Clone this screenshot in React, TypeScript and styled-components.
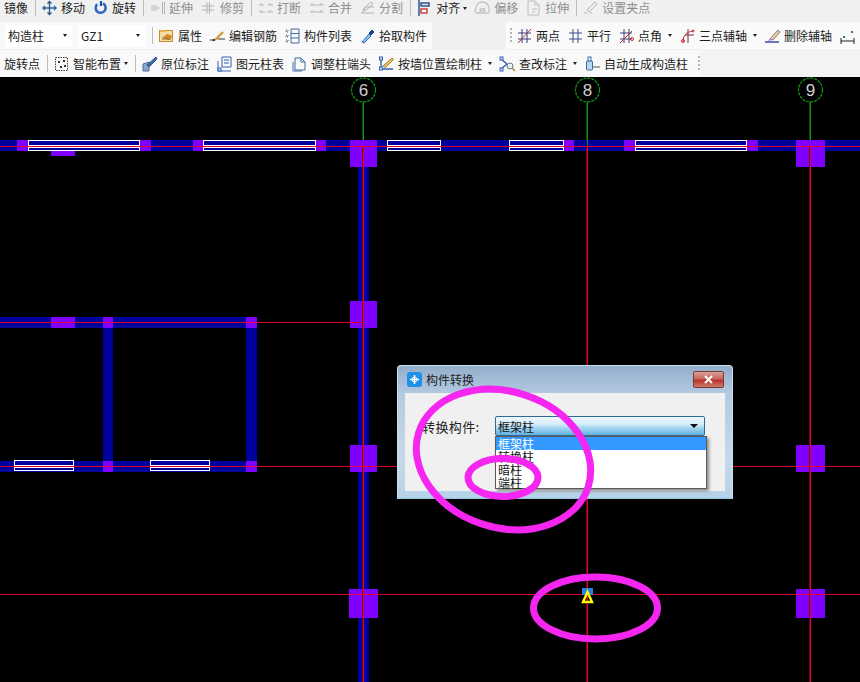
import React from "react";
import { createGlobalStyle, styled } from "styled-components";

const GlobalStyle = createGlobalStyle`
  html, body {
    margin: 0;
    padding: 0;
    background: #000;
    overflow: hidden;
  }
  body {
    font-family: "Noto Sans CJK SC", "Liberation Sans", sans-serif;
  }
`;

const Page = styled.div`
  width: 860px;
  height: 682px;
  display: flex;
  flex-direction: column;
  overflow: hidden;
`;

const Bars = styled.div`
  height: 77px;
  flex: none;
  display: flex;
  flex-direction: column;
  background: #f0f0f0;
`;

const Row = styled.div<{ $height: number; $after: number }>`
  display: flex;
  height: ${(p) => p.$height}px;
  margin-bottom: ${(p) => p.$after}px;
`;

const Strip = styled.div<{ $start: number; $width?: number; $bg?: string }>`
  display: flex;
  align-items: center;
  padding-left: ${(p) => p.$start}px;
  width: ${(p) => (p.$width ? `${p.$width}px` : "auto")};
  flex: ${(p) => (p.$width ? "none" : 1)};
  box-sizing: border-box;
  background: ${(p) => p.$bg || "transparent"};
  overflow: hidden;
  white-space: nowrap;
`;

const Tool = styled.div<{ $off?: boolean }>`
  display: flex;
  flex: none;
  align-items: center;
  gap: 4px;
  margin-right: 8px;
  font-size: 12px;
  line-height: 16px;
  color: ${(p) => (p.$off ? "#8f8f8f" : "#1c1c1c")};
`;

const IconSlot = styled.svg`
  width: 15px;
  height: 16px;
  flex: none;
  overflow: visible;
`;

const Caret = styled.i<{ $gap: number }>`
  width: 0;
  height: 0;
  flex: none;
  margin-left: ${(p) => p.$gap - 4}px;
  border-left: 2.5px solid transparent;
  border-right: 2.5px solid transparent;
  border-top: 3px solid #222;
`;

const Sep = styled.span<{ $lead?: number }>`
  width: 1px;
  height: 17px;
  flex: none;
  margin: 0 6px 0 ${(p) => p.$lead ?? -1}px;
  background: #bdbdbd;
`;

const Grip = styled.span<{ $lead?: number; $after: number }>`
  width: 2px;
  height: 16px;
  flex: none;
  margin-left: ${(p) => p.$lead ?? 0}px;
  margin-right: ${(p) => p.$after}px;
  background: repeating-linear-gradient(#b4b4b4 0 2px, transparent 2px 4px);
`;

const Combo = styled.div`
  width: 67px;
  height: 22px;
  flex: none;
  box-sizing: border-box;
  padding: 0 5px 0 3px;
  margin-right: 6px;
  display: flex;
  align-items: center;
  justify-content: space-between;
  background: #fff;
  font-size: 12px;
  color: #222;
`;

const Canvas = styled.div`
  position: relative;
  flex: 1;
  background: #000;
`;

const Drawing = styled.svg`
  display: block;
  width: 860px;
  height: 605px;
`;

const Marks = styled.svg`
  position: absolute;
  left: 0;
  top: 0;
  width: 860px;
  height: 605px;
  pointer-events: none;
`;

const Dialog = styled.div`
  position: absolute;
  left: 397px;
  top: 288px;
  width: 336px;
  height: 134px;
  box-sizing: border-box;
  padding: 0 7px 7px;
  display: flex;
  flex-direction: column;
  border: 1px solid #c9e2f2;
  border-bottom-color: #8fc4e6;
  border-radius: 4px 4px 0 0;
  background: linear-gradient(#93aecb, #b4cbe1 22%, #c6d9ea 70%, #b5d2e8);
`;

const TitleBar = styled.div`
  height: 27px;
  flex: none;
  display: flex;
  align-items: center;
  gap: 4px;
  margin-left: 2px;
  font-size: 12px;
  color: #222;
`;

const TitleIcon = styled.svg`
  width: 15px;
  height: 15px;
  flex: none;
`;

const CloseButton = styled.div`
  width: 31px;
  height: 17px;
  margin: -1px 1px 0 auto;
  box-sizing: border-box;
  display: flex;
  align-items: center;
  justify-content: center;
  border: 1px solid #7a3a36;
  border-radius: 2px;
  background: linear-gradient(#d9a19b, #c9645b 45%, #b93327 55%, #cf7b68);
`;

const Client = styled.div`
  flex: 1;
  box-sizing: border-box;
  padding: 23px 20px 0 17px;
  background: #f0f0f0;
`;

const Field = styled.div`
  display: flex;
  align-items: center;
  height: 20px;
  font-size: 13px;
  color: #222;
`;

const FieldLabel = styled.label`
  width: 73px;
  flex: none;
  letter-spacing: 0.4px;
`;

const Select = styled.div`
  position: relative;
  flex: 1;
  height: 20px;
  box-sizing: border-box;
  padding: 0 6px 0 2px;
  display: flex;
  align-items: center;
  justify-content: space-between;
  border: 1px solid #2f6a8f;
  border-radius: 2px;
  background: linear-gradient(#eef7fd, #d5ecfa 40%, #a5d6f3 60%, #62b2e2);
  font-size: 12px;
  color: #111;
`;

const SelectCaret = styled.i`
  width: 0;
  height: 0;
  border-left: 4px solid transparent;
  border-right: 4px solid transparent;
  border-top: 4px solid #111;
`;

const DropList = styled.ul`
  position: absolute;
  left: -1px;
  top: 19px;
  width: 212px;
  height: 53px;
  margin: 0;
  padding: 0;
  box-sizing: border-box;
  list-style: none;
  background: #fff;
  border: 1px solid #5c5c5c;
  box-shadow: 2px 2px 3px #8a8a8a;
`;

const DropItem = styled.li<{ $active?: boolean }>`
  height: 13px;
  line-height: 13px;
  padding-left: 2px;
  font-size: 12px;
  color: ${(p) => (p.$active ? "#fff" : "#111")};
  background: ${(p) => (p.$active ? "#3399ff" : "transparent")};
`;

const S = { fill: "none", strokeWidth: 1 };

const icons: Record<string, React.ReactNode> = {
  move: (
    <g {...S} stroke="#2f5f93" strokeWidth={1.4}>
      <path d="M1 8h13M7.500 1.500v13" />
      <path d="M3 6 1 8l2 2M12 6l2 2-2 2M5.500 3.500l2-2 2 2M5.500 12.500l2 2 2-2" />
    </g>
  ),
  rotate: (
    <g {...S} stroke="#2f66c0" strokeWidth={2.6}>
      <path d="M4.200 4.200A5 5 0 1 0 10 3.400" />
      <path d="M8 1v5" stroke="#1f4fa8" strokeWidth={2.2} />
    </g>
  ),
  extend: (
    <g {...S} stroke="#b5b5b5">
      <path d="M1 8h9M12.500 2v12M14.500 2v12" />
      <path d="M1 6h6M1 10h6" />
    </g>
  ),
  trim: (
    <g {...S} stroke="#b5b5b5">
      <path d="M1 6h12M1 10h12M6 2v12M8.500 2v12" />
    </g>
  ),
  breakLine: (
    <g {...S} stroke="#b5b5b5">
      <path d="M1 12h6M9 12h6M1 5h5M10 5h5M3 3v2M12 3v2M3 10v2M12 10v2" />
    </g>
  ),
  merge: (
    <g {...S} stroke="#b5b5b5">
      <path d="M1 12h14M1 5h14M3 3v2M12 3v2M3 10v2M12 10v2" />
    </g>
  ),
  split: (
    <g {...S} stroke="#b5b5b5">
      <path d="M1 13h13M2 13l4-6h8M3 9l8-7 2 2-8 7z" />
    </g>
  ),
  align: (
    <g {...S} stroke="#1f4a8c" strokeWidth={1.4}>
      <path d="M2 0v16" />
      <rect x="4" y="3" width="8" height="3" fill="#e2ecf7" />
      <rect x="4" y="9" width="6" height="4" stroke="#c23838" fill="#fff" />
    </g>
  ),
  offset: (
    <g {...S} stroke="#c4c4c4" strokeWidth={1.3}>
      <path d="M2 13a3 3 0 0 1-1-5 6.500 6.500 0 0 1 13 1 3 3 0 0 1-1 4z" />
      <path d="M5 11a2.500 2.500 0 1 1 5 0z" />
    </g>
  ),
  stretch: (
    <g {...S} stroke="#bdbdbd">
      <path d="M2 1h7l4 4v10H2zM9 1v4h4M6 9h5M6 12h3" />
    </g>
  ),
  grip: (
    <g {...S} stroke="#b5b5b5">
      <path d="M1 13h3M7 13h2M4 10l8-8 2 2-8 8z" />
    </g>
  ),
  props: (
    <g>
      <rect x="0.500" y="2.500" width="13" height="11" fill="#f6dfa4" stroke="#c88a2d" />
      <path d="M1 2h6v2H1z" fill="#e8b04f" />
      <path d="M3 10 8 6l6 2-4 4z" fill="#d08a2c" />
      <path d="M3 11h9" stroke="#8a6a2a" />
    </g>
  ),
  rebar: (
    <g {...S} stroke="#333">
      <path d="M0 12h4M8 11h7" />
      <path d="M5 12 13 4" stroke="#d99a3a" strokeWidth={2.4} />
      <path d="M3 13l2-1-1-1z" fill="#333" />
    </g>
  ),
  list: (
    <g {...S} stroke="#3a6ea5">
      <path d="M6 1h8v14H6zM6 5.500h8M6 10h8" />
      <path d="M1 2h2v2H1zM1 7h2v2H1zM1 12h2v2H1z" stroke="#555" strokeDasharray="1 1" />
    </g>
  ),
  pick: (
    <g {...S}>
      <path d="M2 14 9 6l2 2-7 7z" fill="#8ec5ef" stroke="#2a6db5" />
      <path d="M9 5l3-3 2 2-3 3z" fill="#17488f" stroke="#17488f" />
    </g>
  ),
  smart: (
    <g {...S}>
      <rect x="1.500" y="1.500" width="12" height="13" stroke="#444" strokeDasharray="1.500 1" />
      <path d="M4 5h2v2H4zM9 4h2v2H9zM6 10h2v2H6zM10 9h2v2h-2z" fill="#333" stroke="none" />
    </g>
  ),
  mark: (
    <g {...S}>
      <path d="M1 15V8l6-2v9z" fill="#8aa5c8" stroke="#4a6f9e" />
      <path d="M5 9 14 1l1 2-8 8z" fill="#3b6cb0" stroke="#2a5490" />
    </g>
  ),
  table: (
    <g {...S} stroke="#2f62b0">
      <path d="M5 1h9v10H5zM7 4h5M7 7h5" />
      <path d="M1 5v10h13" />
      <rect x="1" y="12" width="3" height="3" fill="#cfe0f5" />
    </g>
  ),
  colEnd: (
    <g {...S} stroke="#3a6ea5">
      <path d="M3 14V2h6l4 4v8zM9 2v4h4" />
      <path d="M1 6v9h9" />
    </g>
  ),
  wall: (
    <g {...S}>
      <path d="M2 1v12h12" stroke="#2f62b0" strokeWidth={1.4} />
      <rect x="0.500" y="11" width="3" height="3" fill="#cfe0f5" stroke="#2f62b0" />
      <rect x="0.500" y="1" width="3" height="3" fill="#cfe0f5" stroke="#2f62b0" />
      <path d="M4 10 13 2l1.500 1.500-8 8z" fill="#e8c06a" stroke="#a87f2c" />
    </g>
  ),
  audit: (
    <g {...S}>
      <path d="M1 3l6 5M1 13l6-5" stroke="#2f62b0" strokeWidth={1.4} />
      <rect x="0" y="1" width="3" height="3" fill="#cfe0f5" stroke="#2f62b0" />
      <rect x="0" y="12" width="3" height="3" fill="#cfe0f5" stroke="#2f62b0" />
      <circle cx="10" cy="10" r="3" fill="#e7f2fb" stroke="#777" />
      <path d="m12 12 3 3" stroke="#b08a3a" strokeWidth={1.6} />
    </g>
  ),
  autoCol: (
    <g {...S}>
      <rect x="1.500" y="5" width="6" height="9" rx="1" fill="#bcd8f2" stroke="#3a6ea5" />
      <rect x="3" y="1" width="3" height="4" fill="#e7f2fb" stroke="#3a6ea5" />
      <path d="M8 11h7" stroke="#555" />
    </g>
  ),
  twoPoint: (
    <g {...S} stroke="#3a3f7a">
      <path d="M1 5h13M1 11h13M5 1v14M10 1v14" />
      <path d="M1 15 14 1" stroke="#a03a3a" />
    </g>
  ),
  parallel: (
    <g {...S} stroke="#3a4a8a">
      <path d="M1 5h13M1 11h13M5 1v14M10 1v14" />
    </g>
  ),
  angle: (
    <g {...S} stroke="#3a3f7a">
      <path d="M1 5h12M1 11h12M5 1v14M10 1v14" />
      <path d="M1 15 13 3" stroke="#c22a2a" />
      <circle cx="13" cy="11" r="1.500" stroke="#c22a2a" />
    </g>
  ),
  threePoint: (
    <g {...S} stroke="#c22a3a">
      <path d="M3 14C3 8 6 4 13 3" />
      <path d="M8 1v14M5 7h9" stroke="#7a2a3a" />
      <circle cx="3" cy="13" r="1.500" />
      <circle cx="13" cy="3" r="1" />
    </g>
  ),
  eraseAxis: (
    <g {...S}>
      <path d="M0 14h14" stroke="#2a3f9a" strokeWidth={1.4} />
      <path d="M5 11 13 2l2 2-7 8z" fill="#e8d27a" stroke="#8a6fb0" />
      <path d="M3 13l2-3 3 2z" fill="#a88fd0" />
    </g>
  ),
  dimension: (
    <g {...S} stroke="#222">
      <path d="M1 13h13M1 10v6M14 10v6" />
      <path d="M3 8h2v2H3zM11 3h2v2h-2z" fill="#2d8a3a" stroke="none" />
    </g>
  ),
};

const ToolIcon = ({ name }: { name: string }) => (
  <IconSlot viewBox="0 0 15 16">{icons[name]}</IconSlot>
);

interface IToolProps {
  icon?: string;
  label: string;
  off?: boolean;
  caret?: number;
}

const Item = ({ icon, label, off, caret }: IToolProps) => (
  <Tool $off={off}>
    {icon && <ToolIcon name={icon} />}
    {label && <span>{label}</span>}
    {caret !== undefined && <Caret $gap={caret} />}
  </Tool>
);

// drawing data, x/y/w/h in page pixels
const beams = [
  [0, 140, 860, 11],
  [358, 167, 11, 515],
  [0, 317, 257, 11],
  [0, 461, 257, 11],
  [103, 328, 10, 133],
  [246, 328, 11, 133],
];

const columns = [
  [17, 140, 11, 11],
  [140, 140, 11, 11],
  [193, 140, 10, 11],
  [316, 140, 10, 11],
  [564, 140, 10, 11],
  [624, 140, 11, 11],
  [747, 140, 11, 11],
  [51, 148, 24, 8],
  [350, 140, 27, 27],
  [796, 140, 29, 27],
  [350, 301, 27, 27],
  [350, 445, 27, 27],
  [796, 445, 29, 27],
  [349, 589, 29, 29],
  [796, 589, 29, 29],
  [51, 317, 24, 11],
  [103, 317, 10, 11],
  [246, 317, 11, 11],
  [103, 461, 10, 11],
  [246, 461, 11, 11],
];

const windows = [
  [28, 140, 112],
  [203, 140, 113],
  [387, 140, 54],
  [509, 140, 55],
  [635, 140, 112],
  [14, 460, 60],
  [150, 460, 60],
];

const axes = [
  { x: 363, label: "6" },
  { x: 587, label: "8" },
  { x: 810, label: "9" },
];

// x, y, w, h of the one pixel red axis lines
const redLines = [
  [0, 146, 860, 1],
  [0, 322, 363, 1],
  [0, 466, 860, 1],
  [0, 594, 860, 1],
  [363, 146, 1, 536],
  [587, 146, 1, 536],
  [810, 146, 1, 536],
];

const App = () => {
  return (
    <Page>
      <GlobalStyle />
      <Bars>
        <Row $height={16} $after={6}>
          <Strip $start={4}>
            <Item label="镜像" />
            <Sep />
            <Item icon="move" label="移动" />
            <Item icon="rotate" label="旋转" />
            <Sep />
            <Item icon="extend" label="延伸" off />
            <Item icon="trim" label="修剪" off />
            <Sep />
            <Item icon="breakLine" label="打断" off />
            <Item icon="merge" label="合并" off />
            <Item icon="split" label="分割" off />
            <Sep />
            <Item icon="align" label="对齐" caret={3} />
            <Item icon="offset" label="偏移" off />
            <Item icon="stretch" label="拉伸" off />
            <Sep />
            <Item icon="grip" label="设置夹点" off />
          </Strip>
        </Row>
        <Row $height={27} $after={1}>
          <Strip $start={5} $width={432} $bg="#f9f9f9">
            <Combo>
              构造柱
              <Caret $gap={4} />
            </Combo>
            <Combo>
              GZ1
              <Caret $gap={4} />
            </Combo>
            <Sep $lead={1} />
            <Item icon="props" label="属性" />
            <Item icon="rebar" label="编辑钢筋" />
            <Item icon="list" label="构件列表" />
            <Item icon="pick" label="拾取构件" />
          </Strip>
          <Strip $start={78} $bg="linear-gradient(90deg, #f0f0f0 74px, #fafafa 74px)">
            <Grip $after={5} />
            <Item icon="twoPoint" label="两点" />
            <Item icon="parallel" label="平行" />
            <Item icon="angle" label="点角" caret={6} />
            <Item icon="threePoint" label="三点辅轴" caret={6} />
            <Item icon="eraseAxis" label="删除辅轴" />
            <Item icon="dimension" label="" />
          </Strip>
        </Row>
        <Row $height={27} $after={0}>
          <Strip $start={4} $bg="linear-gradient(90deg, #f9f9f9 700px, #f3f3f3 700px)">
            <Item label="旋转点" />
            <Sep />
            <Item icon="smart" label="智能布置" caret={3} />
            <Sep />
            <Item icon="mark" label="原位标注" />
            <Item icon="table" label="图元柱表" />
            <Item icon="colEnd" label="调整柱端头" />
            <Item icon="wall" label="按墙位置绘制柱" caret={6} />
            <Item icon="audit" label="查改标注" caret={6} />
            <Item icon="autoCol" label="自动生成构造柱" />
            <Grip $lead={2} $after={0} />
          </Strip>
        </Row>
      </Bars>
      <Canvas>
        <Drawing viewBox="0 77 860 605">
          {beams.map(([x, y, w, h]) => (
            <rect key={`${x}-${y}`} x={x} y={y} width={w} height={h} fill="#00009c" />
          ))}
          {columns.map(([x, y, w, h]) => (
            <rect key={`${x}-${y}`} x={x} y={y} width={w} height={h} fill="#7f00ff" />
          ))}
          {windows.map(([x, y, w]) => (
            <g key={`${x}-${y}`} fill="#00009c" stroke="#fff">
              <rect x={x + 0.5} y={y + 0.5} width={w - 1} height={5} />
              <rect x={x + 0.5} y={y + 7.5} width={w - 1} height={3} />
            </g>
          ))}
          {axes.map((a) => (
            <g key={a.label}>
              <circle
                cx={a.x + 0.5}
                cy={90}
                r={12}
                fill="none"
                stroke="#129412"
                strokeWidth={1.3}
                strokeDasharray="3 1"
              />
              <rect x={a.x - 1} y={102} width={1} height={38} fill="#0a4f0a" />
              <rect x={a.x} y={102} width={1} height={38} fill="#129412" />
              <text
                x={a.x + 0.5}
                y={96}
                textAnchor="middle"
                fontSize={17}
                fill="#cfcfcf"
                fontFamily="'Liberation Sans', sans-serif"
              >
                {a.label}
              </text>
            </g>
          ))}
          <rect x={587} y={140} width={1} height={6} fill="#129412" />
          {/* dim neighbour column, the reference's lines bleed into it */}
          {redLines
            .filter(([, , w]) => w === 1)
            .map(([x, y, , h]) => (
              <rect key={`${x}-${y}`} x={x - 1} y={y} width={1} height={h} fill="#7a0018" />
            ))}
          {redLines.map(([x, y, w, h]) => (
            <rect key={`${x}-${y}`} x={x} y={y} width={w} height={h} fill="#e0002a" />
          ))}
          <rect x={582} y={588} width={11} height={7} fill="#2f7fe0" />
          <path d="M587.500 592 592 602H583z" fill="none" stroke="#ffff00" strokeWidth={2.4} />
        </Drawing>
        <Dialog>
          <TitleBar>
            <TitleIcon viewBox="0 0 15 15">
              <rect width="15" height="15" rx="3" fill="#1e90e8" />
              <path d="M7.500 3v9M3 7.500h9" stroke="#fff" strokeWidth={1.5} fill="none" />
              <circle cx="7.500" cy="7.500" r="2.500" stroke="#fff" fill="none" />
            </TitleIcon>
            构件转换
            <CloseButton>
              <svg width="11" height="9" viewBox="0 0 11 9">
                <path d="M2 1l7 7M9 1 2 8" stroke="#fff" strokeWidth={2} />
              </svg>
            </CloseButton>
          </TitleBar>
          <Client>
            <Field>
              <FieldLabel>转换构件:</FieldLabel>
              <Select>
                框架柱
                <SelectCaret />
                <DropList>
                  <DropItem $active>框架柱</DropItem>
                  <DropItem>转换柱</DropItem>
                  <DropItem>暗柱</DropItem>
                  <DropItem>端柱</DropItem>
                </DropList>
              </Select>
            </Field>
          </Client>
        </Dialog>
        <Marks viewBox="0 77 860 605">
          <g fill="none" stroke="#f526f0" strokeWidth={7}>
            <ellipse cx={503.500} cy={459.500} rx={89} ry={68} transform="rotate(18 503.500 459.500)" />
            <ellipse cx={503} cy={477.500} rx={35} ry={19} />
            <ellipse cx={595.500} cy={608} rx={62} ry={31} />
          </g>
        </Marks>
      </Canvas>
    </Page>
  );
};

export default App;
